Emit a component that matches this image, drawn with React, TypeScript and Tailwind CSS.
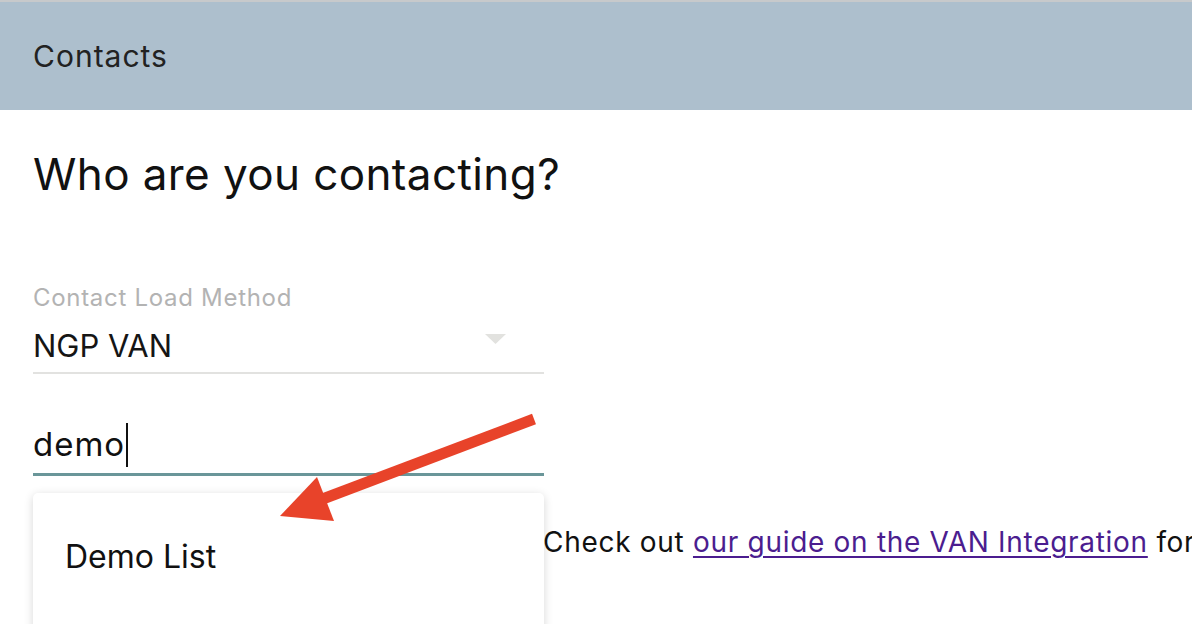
import React from 'react'

export default function App() {
  return (
    <div className="w-[1192px] h-[624px] overflow-hidden bg-white relative" style={{ fontFamily: 'Inter, "Noto Sans", sans-serif' }}>
      {/* header bar */}
      <div className="h-[110px] border-t-2 border-[#c7c9cb] bg-[#adbfcd] flex items-center px-[33px]">
        <span className="text-[30px] leading-none text-[#222] tracking-[1px]">Contacts</span>
      </div>

      <div className="px-[33px]">
        <h1 className="mt-[40px] text-[44px] leading-[48px] text-[#111] tracking-[0.4px]">Who are you contacting?</h1>

        <div className="relative w-[511px] mt-[86px]">
          {/* select */}
          <label className="block text-[24px] leading-[28px] text-[#b3b3b3] tracking-[0.7px]">Contact Load Method</label>
          <div className="flex items-end justify-between h-[62px] pb-[6px] border-b-2 border-[#e2e2e0]">
            <span className="text-[31px] leading-[40px] text-[#151515]">NGP VAN</span>
            <svg width="21" height="10" viewBox="0 0 21 10" className="mr-[38px] mb-[22px]">
              <path d="M0 0 L21 0 L10.5 10 Z" fill="#e2e2df" />
            </svg>
          </div>

          {/* autocomplete input */}
          <div className="mt-[42px] h-[60px] flex items-center border-b-[3px] border-[#6a9699]">
            <span className="text-[33px] text-[#111] tracking-[1px]">demo</span>
            <span className="w-[2px] h-[44px] bg-[#111] ml-[1px]"></span>
          </div>

          {/* suggestion menu */}
          <div className="absolute left-0 top-[calc(100%+17px)] w-[511px] h-[160px] bg-white rounded-[5px] shadow-[0_2px_10px_rgba(0,0,0,0.16)] z-10">
            <div className="pl-[32px] pt-[40px] text-[32px] leading-[48px] text-[#111]">Demo List</div>
          </div>
        </div>

        <p className="mt-[48px] ml-[510px] text-[28px] leading-[36px] text-[#111] tracking-[0.7px] whitespace-nowrap">
          Check out{' '}
          <a href="#" className="text-[#4b1d8f] underline underline-offset-[4px] decoration-[2px]">our guide on the VAN Integration</a>{' '}
          for
        </p>
      </div>

      {/* annotation arrow */}
      <svg className="absolute left-0 top-0 pointer-events-none z-20" width="1192" height="624">
        <line x1="534" y1="419" x2="320" y2="500" stroke="#e8432a" strokeWidth="11" />
        <path d="M280 516 L317 477 L334 521 Z" fill="#e8432a" />
      </svg>
    </div>
  )
}
